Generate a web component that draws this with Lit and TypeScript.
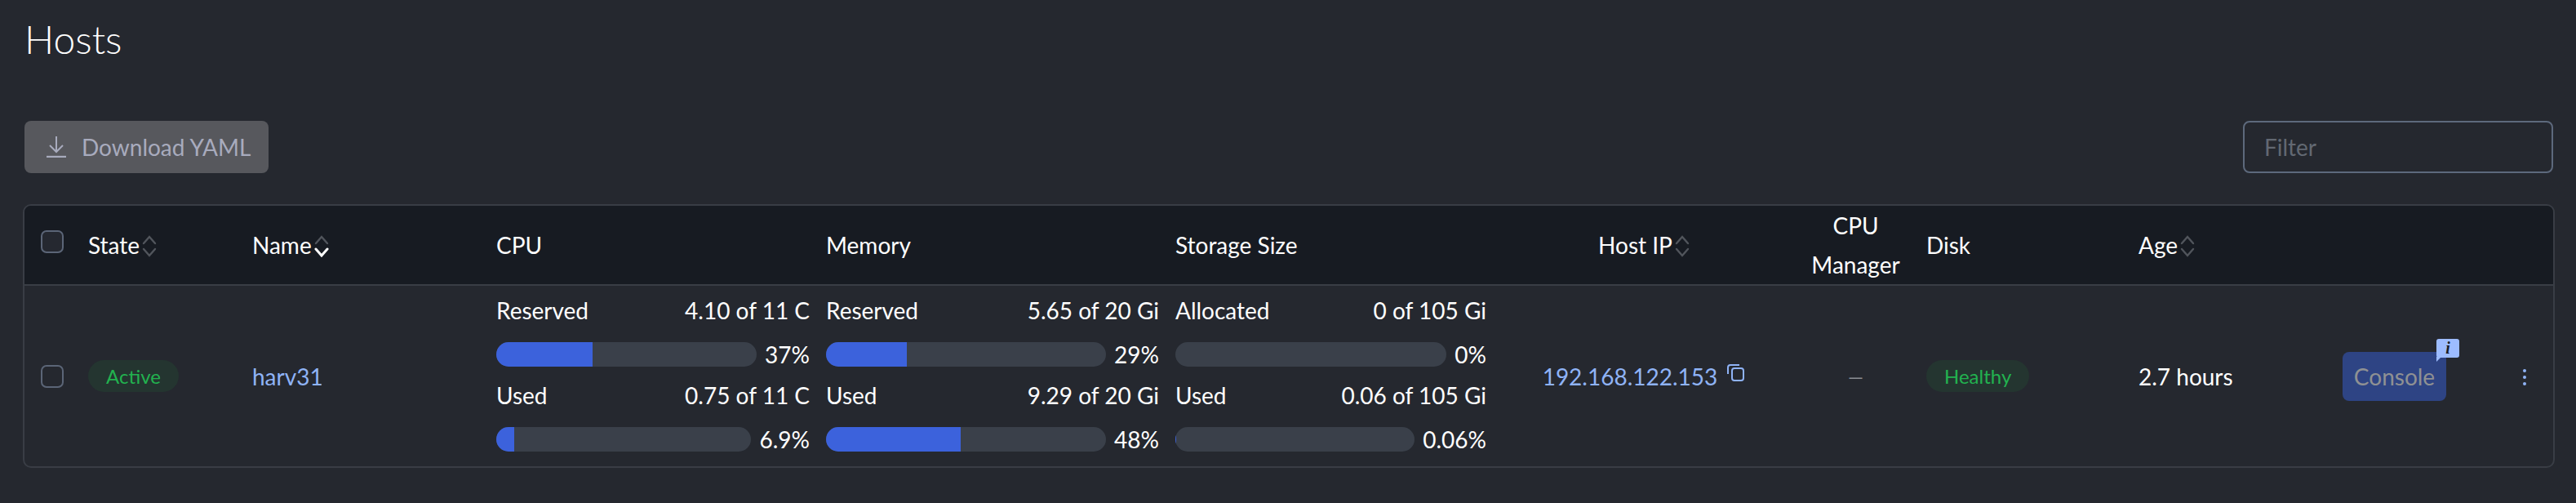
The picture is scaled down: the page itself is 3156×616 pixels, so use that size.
import { LitElement, html, css, svg } from "lit";
import { customElement } from "lit/decorators.js";

type Meter = { label: string; value: string; pct: string; fill: number; barW: string };

const sortIcon = (active = false) => html`<svg class="sort" viewBox="0 0 18 28" width="18" height="28" fill="none" stroke-width="2.4" stroke-linecap="round">
  <path d="M2 11 L9 3 L16 11" stroke="#51555c"></path>
  <path d="M2 18 L9 26 L16 18" stroke="${active ? "#ffffff" : "#51555c"}" stroke-width="${active ? 3 : 2.4}"></path>
</svg>`;

const meters: Meter[][] = [
  [
    { label: "Reserved", value: "4.10 of 11 C", pct: "37%", fill: 37, barW: "" },
    { label: "Used", value: "0.75 of 11 C", pct: "6.9%", fill: 6.9, barW: "" },
  ],
  [
    { label: "Reserved", value: "5.65 of 20 Gi", pct: "29%", fill: 29, barW: "" },
    { label: "Used", value: "9.29 of 20 Gi", pct: "48%", fill: 48, barW: "" },
  ],
  [
    { label: "Allocated", value: "0 of 105 Gi", pct: "0%", fill: 0, barW: "" },
    { label: "Used", value: "0.06 of 105 Gi", pct: "0.06%", fill: 0.06, barW: "" },
  ],
];

@customElement("app-root")
export class AppRoot extends LitElement {
  static styles = css`
    :host {
      display: block;
      width: 3156px;
      height: 616px;
      box-sizing: border-box;
      background: #25282f;
      color: #fff;
      font-family: Lato, "Liberation Sans", sans-serif;
      font-size: 28px;
      padding: 0 26px 0 28px;
    }
    * { box-sizing: border-box; }
    h1 {
      margin: 0;
      padding: 0 0 0 2px;
      height: 148px;
      font-size: 48px;
      font-weight: 300;
      line-height: 96px;
    }
    .tools {
      display: flex;
      justify-content: space-between;
      height: 102px;
      padding: 0 0 0 2px;
    }
    .download {
      display: flex;
      align-items: center;
      gap: 19px;
      width: 299px;
      height: 64px;
      padding: 0 0 0 27px;
      background: #57585d;
      color: #a8abbd;
      border: 0;
      border-radius: 8px;
      font: inherit;
    }
    .filter {
      width: 380px;
      height: 64px;
      margin-right: 2px;
      padding: 0 24px;
      border: 2px solid #5d697c;
      border-radius: 8px;
      color: #626872;
      display: flex;
      align-items: center;
    }
    .table {
      width: 3102px;
      border: 2px solid #393d45;
      border-radius: 10px;
      overflow: hidden;
    }
    .grid {
      display: grid;
      grid-template-columns: 68px 201px 299px 404px 428px 401px 366px 153px 260px 260px 1fr 60px;
    }
    .head {
      height: 98px;
      background: #171b22;
      border-bottom: 2px solid #393d45;
      align-items: center;
      line-height: 48px;
    }
    .row { height: 221px; align-items: center; }
    .cell { padding: 0 10px; display: flex; align-items: center; min-width: 0; }
    .center { justify-content: center; text-align: center; }
    .th-sort { gap: 3px; }
    .sort { flex: none; margin-top: 2px; }
    .check-cell { padding: 0 0 0 20px; }
    .check {
      width: 28px;
      height: 28px;
      border: 2px solid #5b6577;
      border-radius: 7px;
      background: #252830;
    }
    .head .check { margin-top: -8px; }
    .row .check { margin-top: 0; background: transparent; }
    .pill {
      display: inline-flex;
      align-items: center;
      height: 39px;
      padding: 0 22px;
      border-radius: 20px;
      background: #243530;
      color: #22b24f;
      font-size: 24px;
    }
    a { color: #8fb3f6; text-decoration: none; }
    .meters { display: block; padding-top: 6px; height: 221px; }
    .labels { display: flex; justify-content: space-between; height: 48px; line-height: 48px; margin-bottom: 15px; }
    .barline { display: flex; align-items: center; gap: 10px; height: 30px; margin-bottom: 11px; }
    .track { flex: 1; height: 30px; border-radius: 15px; background: #3a404a; overflow: hidden; }
    .fill { height: 100%; background: #3c62dc; }
    .copy { flex: none; margin: -8px 0 0 12px; }
    .ipwrap { display: flex; align-items: center; }
    .dash { color: #8a8d93; font-size: 24px; }
    .console-cell { padding: 0; }
    .console {
      position: relative;
      width: 127px;
      height: 60px;
      display: flex;
      align-items: center;
      justify-content: center;
      background: #2e4484;
      color: #8f9193;
      border-radius: 8px;
    }
    .badge {
      position: absolute;
      left: 115px;
      top: -16px;
      width: 28px;
      height: 23px;
      background: #9dbcff;
      border-radius: 3px;
      color: #1a1c22;
      font: italic bold 20px/22px "Liberation Serif", serif;
      text-align: center;
    }
    .badge::after {
      content: "";
      position: absolute;
      left: 0;
      top: 22px;
      border-top: 6px solid #9dbcff;
      border-right: 6px solid transparent;
    }
    .dots { display: flex; flex-direction: column; gap: 4px; padding: 2px 0 0 23px; }
    .dots i { width: 4px; height: 4px; border-radius: 50%; background: #8fb3f6; display: block; }
  `;

  private meterCell(list: Meter[]) {
    return html`<div class="cell meters">
      ${list.map(
        (m) => html`<div class="labels"><span>${m.label}</span><span>${m.value}</span></div>
          <div class="barline">
            <div class="track"><div class="fill" style="width:${m.fill}%"></div></div>
            <span>${m.pct}</span>
          </div>`
      )}
    </div>`;
  }

  render() {
    return html`
      <h1>Hosts</h1>
      <div class="tools">
        <button class="download">
          <svg width="24" height="26" viewBox="0 0 24 26" fill="none" stroke="#a8abbd" stroke-width="2">
            <path d="M12 0 V18 M4 11 L12 19 L20 11"></path>
            <path d="M0 25 H24" stroke-width="2.4"></path>
          </svg>
          <span>Download YAML</span>
        </button>
        <div class="filter">Filter</div>
      </div>
      <div class="table">
        <div class="grid head">
          <div class="cell check-cell"><div class="check"></div></div>
          <div class="cell th-sort">State ${sortIcon()}</div>
          <div class="cell th-sort">Name ${sortIcon(true)}</div>
          <div class="cell">CPU</div>
          <div class="cell">Memory</div>
          <div class="cell">Storage Size</div>
          <div class="cell center th-sort">Host IP ${sortIcon()}</div>
          <div class="cell center">CPU<br />Manager</div>
          <div class="cell">Disk</div>
          <div class="cell th-sort">Age ${sortIcon()}</div>
          <div class="cell"></div>
          <div class="cell"></div>
        </div>
        <div class="grid row">
          <div class="cell check-cell"><div class="check"></div></div>
          <div class="cell"><span class="pill">Active</span></div>
          <div class="cell"><a>harv31</a></div>
          ${meters.map((m) => this.meterCell(m))}
          <div class="cell center">
            <span class="ipwrap"><a>192.168.122.153</a>
              <svg class="copy" width="22" height="21" viewBox="0 0 22 21" fill="none" stroke="#8fb3f6" stroke-width="2">
                <rect x="6" y="5" width="14" height="15" rx="3"></rect>
                <path d="M1 12 V4 Q1 1 4 1 H15"></path>
              </svg></span>
          </div>
          <div class="cell center"><span class="dash">—</span></div>
          <div class="cell"><span class="pill">Healthy</span></div>
          <div class="cell">2.7 hours</div>
          <div class="cell console-cell">
            <div class="console">Console<span class="badge">i</span></div>
          </div>
          <div class="cell console-cell"><div class="dots"><i></i><i></i><i></i></div></div>
        </div>
      </div>
    `;
  }
}
